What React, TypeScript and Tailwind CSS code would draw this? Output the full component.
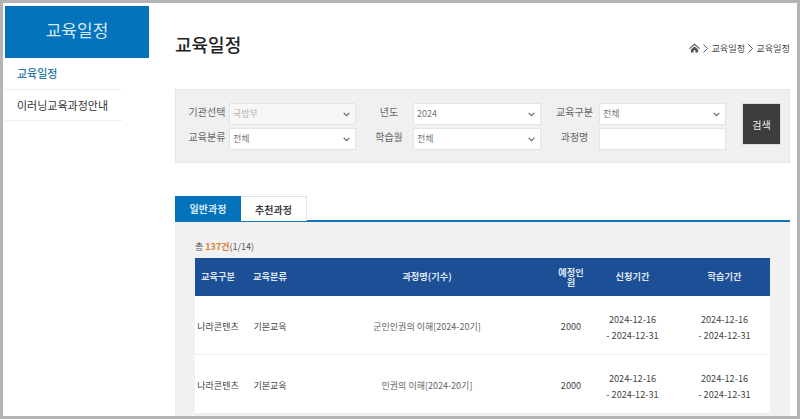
import React from "react";

const rows = [
  { type: "나라콘텐츠", cat: "기본교육", name: "군인인권의 이해[2024-20기]" },
  { type: "나라콘텐츠", cat: "기본교육", name: "인권의 이해[2024-20기]" },
];

const Chevron = () => (
  <svg width="7" height="5" viewBox="0 0 7 5" fill="none" stroke="#666" strokeWidth="1.2">
    <path d="M.7.8l2.8 2.8L6.3.8" />
  </svg>
);

function SelectBox({ value, muted }: { value: string; muted?: boolean }) {
  return (
    <div
      className={`flex h-[22px] items-center justify-between border border-[#e4e4e4] pl-[3px] pr-[5px] text-[9px] ${
        muted ? "bg-[#f7f7f7] text-[#b0b0b0]" : "bg-white text-[#777]"
      }`}
    >
      <span>{value}</span>
      <Chevron />
    </div>
  );
}

function FilterLabel({ children }: { children: React.ReactNode }) {
  return <div className="pl-[9px] text-center text-[10px] leading-[18px] text-[#666]">{children}</div>;
}

export default function App() {
  return (
    <div
      className="h-[419px] w-[800px] overflow-hidden border-[3px] border-[#b4b4b4] bg-white"
      style={{ fontFamily: '"Noto Sans CJK KR", "Noto Sans", sans-serif' }}
    >
      <div className="flex h-full">
        {/* sidebar */}
        <aside className="ml-[2px] mt-[3px] w-[144px] shrink-0">
          <div className="flex h-[52px] items-center justify-center bg-[#0573bb] pb-[4px] text-[17px] text-[#d4e8f6]">
            교육일정
          </div>
          <div className="w-[117px]">
            <div className="flex h-[32px] items-center border-b border-[#eee] pl-[12px] text-[11px] font-medium text-[#2a76a6]">
              교육일정
            </div>
            <div className="flex h-[31px] items-center border-b border-[#eee] pl-[12px] text-[11px] text-[#333]">
              이러닝교육과정안내
            </div>
          </div>
        </aside>

        {/* content */}
        <main className="ml-[26px] w-[615px] shrink-0">
          <div className="flex h-[86px] items-start justify-between">
            <h1 className="mt-[28px] text-[18px] leading-[26px] font-medium text-[#222]">교육일정</h1>
            <div className="mt-[37px] flex items-center gap-[3px] text-[9.2px] leading-[16px] text-[#444]">
              <svg width="11" height="10" viewBox="0 0 24 22" fill="#555">
                <path d="M12 1 0 11.5l1.6 1.8L12 4.2l10.4 9.1 1.6-1.8L12 1zM4 14.5V21h6v-5h4v5h6v-6.5L12 7.5z" />
              </svg>
              <svg width="5" height="9" viewBox="0 0 5 9" fill="none" stroke="#555">
                <path d="M.5.5l4 4-4 4" />
              </svg>
              <span>교육일정</span>
              <svg width="5" height="9" viewBox="0 0 5 9" fill="none" stroke="#555">
                <path d="M.5.5l4 4-4 4" />
              </svg>
              <span>교육일정</span>
            </div>
          </div>

          {/* search filter */}
          <div className="h-[74px] border border-[#e6e6e6] bg-[#f0f0f0] pt-[13px]">
            <div className="grid grid-cols-[53px_127px_57px_128px_58px_127px_16px_39px] grid-rows-[22px_22px] gap-y-[3px]">
              <FilterLabel>기관선택</FilterLabel>
              <SelectBox value="국방부" muted />
              <FilterLabel>년도</FilterLabel>
              <SelectBox value="2024" />
              <FilterLabel>교육구분</FilterLabel>
              <SelectBox value="전체" />
              <div />
              <div className="row-span-2 flex h-[42px] items-center justify-center border border-[#ddd] bg-[#3d3d3d] text-[10px] text-[#eee]">
                검색
              </div>
              <FilterLabel>교육분류</FilterLabel>
              <SelectBox value="전체" />
              <FilterLabel>학습월</FilterLabel>
              <SelectBox value="전체" />
              <FilterLabel>과정명</FilterLabel>
              <div className="h-[22px] border border-[#e4e4e4] bg-white" />
            </div>
          </div>

          {/* tabs */}
          <div className="mt-[33px] flex h-[26px] border-b-2 border-[#0f78b4] text-[10px] font-bold">
            <div className="flex h-[25px] w-[66px] items-center justify-center bg-[#0573bb] text-[#d8ecf8]">일반과정</div>
            <div className="flex h-[25px] w-[66px] items-center justify-center border-t border-r border-[#e2e2e2] bg-white text-[#444]">
              추천과정
            </div>
          </div>

          {/* list */}
          <div className="h-[200px] bg-[#f1f1f1] px-[20px] pt-[18px]">
            <div className="h-[18px] text-[9px] leading-[14px] text-[#555]">
              총 <span className="font-bold text-[#e07b2e]">137건</span>(1/14)
            </div>
            <div className="grid h-[38px] grid-cols-[46px_58px_256px_32px_91px_93px] items-center bg-[#1c4f96] text-center text-[9.2px] font-bold text-[#dfe7f2]">
              <div>교육구분</div>
              <div>교육분류</div>
              <div>과정명(기수)</div>
              <div className="leading-[10px]">예정인원</div>
              <div>신청기간</div>
              <div>학습기간</div>
            </div>
            {rows.map((r) => (
              <div
                key={r.name}
                className="grid h-[59px] grid-cols-[46px_58px_256px_32px_91px_93px] items-center border-b border-[#eee] bg-white pt-[3px] text-center text-[9px] text-[#444]"
              >
                <div className="whitespace-nowrap">{r.type}</div>
                <div>{r.cat}</div>
                <div className="text-[#666]">{r.name}</div>
                <div className="text-[9.2px]">2000</div>
                <div className="text-[9.2px] leading-[16px]">
                  2024-12-16
                  <br />- 2024-12-31
                </div>
                <div className="text-[9.2px] leading-[16px]">
                  2024-12-16
                  <br />- 2024-12-31
                </div>
              </div>
            ))}
          </div>
        </main>
      </div>
    </div>
  );
}
